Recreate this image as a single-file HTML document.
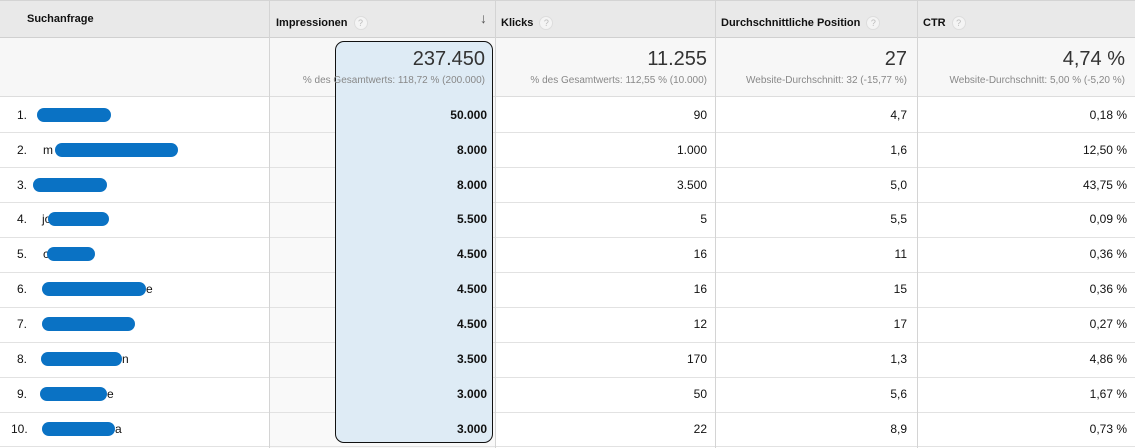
<!DOCTYPE html><html><head><style>
body{margin:0;width:1135px;height:448px;overflow:hidden;background:#fff;font-family:"Liberation Sans",Arial,sans-serif;position:relative}
.a{position:absolute}
.hd{left:0;top:0;width:1135px;height:38px;background:#e9e9e9;border-top:1px solid #d4d4d4;border-bottom:1px solid #d0d0d0;box-sizing:border-box}
.sm{left:0;top:38px;width:1135px;height:59px;background:#f7f7f7;border-bottom:1px solid #ddd;box-sizing:border-box}
.vl{top:0;width:1px;height:448px;background:#d4d4d4}
.hl{left:0;width:1135px;height:1px;background:#e2e2e2}
.ht{font-size:11px;font-weight:bold;color:#111;top:15px}
.q{display:inline-block;width:12px;height:12px;border-radius:50%;background:#f4f4f4;border:1px solid #ddd;color:#bbb;font-size:9px;text-align:center;line-height:12px;font-weight:normal;margin-left:6px;vertical-align:middle}
.big{font-size:20px;color:#333;text-align:right;top:48px}
.sub{font-size:10px;color:#888;text-align:right;top:75px;white-space:nowrap}
.c{font-size:12px;color:#111;text-align:right}
.b{font-weight:bold}
.blob{background:#0a72c4;height:14px;border-radius:7px}
.n{font-size:12px;color:#111}
</style></head><body>
<div class="a hd"></div>
<div class="a sm"></div>
<div class="a" style="left:270px;top:97px;width:225px;height:351px;background:#f9f9f9"></div>
<div class="a hl" style="top:132px"></div><div class="a hl" style="top:167px"></div><div class="a hl" style="top:202px"></div><div class="a hl" style="top:237px"></div><div class="a hl" style="top:272px"></div><div class="a hl" style="top:307px"></div><div class="a hl" style="top:342px"></div><div class="a hl" style="top:377px"></div><div class="a hl" style="top:412px"></div><div class="a hl" style="top:446px"></div>
<div class="a vl" style="left:269px"></div><div class="a vl" style="left:495px"></div><div class="a vl" style="left:715px"></div><div class="a vl" style="left:917px"></div>
<div class="a" style="left:335px;top:41px;width:158px;height:402px;background:#deebf5;border:1.5px solid #111;border-radius:9px;box-sizing:border-box"></div>
<div class="a ht" style="left:27px;top:13px">Suchanfrage</div>
<div class="a ht" style="left:276px;top:16px">Impressionen<span class="q">?</span></div>
<div class="a" style="left:480px;top:10px;font-size:14px;color:#555">↓</div>
<div class="a ht" style="left:501px;top:16px">Klicks<span class="q">?</span></div>
<div class="a ht" style="left:721px;top:16px">Durchschnittliche Position<span class="q">?</span></div>
<div class="a ht" style="left:923px;top:16px">CTR<span class="q">?</span></div>
<div class="a big" style="right:650px">237.450</div><div class="a sub" style="right:650px">% des Gesamtwerts: 118,72 % (200.000)</div>
<div class="a big" style="right:428px">11.255</div><div class="a sub" style="right:428px">% des Gesamtwerts: 112,55 % (10.000)</div>
<div class="a big" style="right:228px">27</div><div class="a sub" style="right:228px">Website-Durchschnitt: 32 (-15,77 %)</div>
<div class="a big" style="right:10px">4,74 %</div><div class="a sub" style="right:10px">Website-Durchschnitt: 5,00 % (-5,20 %)</div>
<div class="a n" style="left:17px;top:108px">1.</div><div class="a blob" style="left:37px;top:108px;width:74px"></div>
<div class="a n" style="left:17px;top:143px">2.</div><div class="a n" style="left:43px;top:143px">m</div><div class="a blob" style="left:55px;top:143px;width:123px"></div>
<div class="a n" style="left:17px;top:178px">3.</div><div class="a blob" style="left:33px;top:178px;width:74px"></div>
<div class="a n" style="left:17px;top:212px">4.</div><div class="a n" style="left:42px;top:212px">jo</div><div class="a blob" style="left:48px;top:212px;width:61px"></div>
<div class="a n" style="left:17px;top:247px">5.</div><div class="a n" style="left:43px;top:247px">c</div><div class="a blob" style="left:47px;top:247px;width:48px"></div>
<div class="a n" style="left:17px;top:282px">6.</div><div class="a blob" style="left:42px;top:282px;width:104px"></div><div class="a n" style="left:146px;top:282px">e</div>
<div class="a n" style="left:17px;top:317px">7.</div><div class="a blob" style="left:42px;top:317px;width:93px"></div>
<div class="a n" style="left:17px;top:352px">8.</div><div class="a blob" style="left:41px;top:352px;width:81px"></div><div class="a n" style="left:122px;top:352px">n</div>
<div class="a n" style="left:17px;top:387px">9.</div><div class="a blob" style="left:40px;top:387px;width:67px"></div><div class="a n" style="left:107px;top:387px">e</div>
<div class="a n" style="left:11px;top:422px">10.</div><div class="a blob" style="left:42px;top:422px;width:73px"></div><div class="a n" style="left:115px;top:422px">a</div>
<div class="a c b" style="right:648px;top:108px">50.000</div><div class="a c" style="right:428px;top:108px">90</div><div class="a c" style="right:228px;top:108px">4,7</div><div class="a c" style="right:8px;top:108px">0,18 %</div>
<div class="a c b" style="right:648px;top:143px">8.000</div><div class="a c" style="right:428px;top:143px">1.000</div><div class="a c" style="right:228px;top:143px">1,6</div><div class="a c" style="right:8px;top:143px">12,50 %</div>
<div class="a c b" style="right:648px;top:178px">8.000</div><div class="a c" style="right:428px;top:178px">3.500</div><div class="a c" style="right:228px;top:178px">5,0</div><div class="a c" style="right:8px;top:178px">43,75 %</div>
<div class="a c b" style="right:648px;top:212px">5.500</div><div class="a c" style="right:428px;top:212px">5</div><div class="a c" style="right:228px;top:212px">5,5</div><div class="a c" style="right:8px;top:212px">0,09 %</div>
<div class="a c b" style="right:648px;top:247px">4.500</div><div class="a c" style="right:428px;top:247px">16</div><div class="a c" style="right:228px;top:247px">11</div><div class="a c" style="right:8px;top:247px">0,36 %</div>
<div class="a c b" style="right:648px;top:282px">4.500</div><div class="a c" style="right:428px;top:282px">16</div><div class="a c" style="right:228px;top:282px">15</div><div class="a c" style="right:8px;top:282px">0,36 %</div>
<div class="a c b" style="right:648px;top:317px">4.500</div><div class="a c" style="right:428px;top:317px">12</div><div class="a c" style="right:228px;top:317px">17</div><div class="a c" style="right:8px;top:317px">0,27 %</div>
<div class="a c b" style="right:648px;top:352px">3.500</div><div class="a c" style="right:428px;top:352px">170</div><div class="a c" style="right:228px;top:352px">1,3</div><div class="a c" style="right:8px;top:352px">4,86 %</div>
<div class="a c b" style="right:648px;top:387px">3.000</div><div class="a c" style="right:428px;top:387px">50</div><div class="a c" style="right:228px;top:387px">5,6</div><div class="a c" style="right:8px;top:387px">1,67 %</div>
<div class="a c b" style="right:648px;top:422px">3.000</div><div class="a c" style="right:428px;top:422px">22</div><div class="a c" style="right:228px;top:422px">8,9</div><div class="a c" style="right:8px;top:422px">0,73 %</div>
</body></html>
